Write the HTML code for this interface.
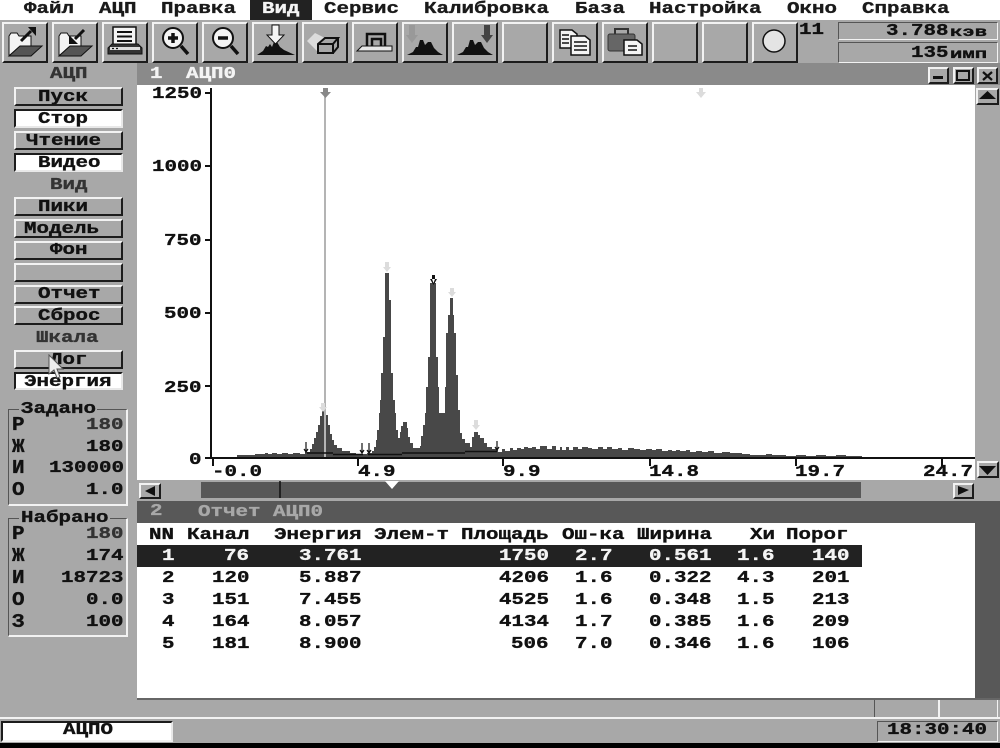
<!DOCTYPE html>
<html><head><meta charset="utf-8"><style>
html,body{margin:0;padding:0;background:#000}
#p{position:relative;width:1000px;height:748px;overflow:hidden;background:#a8a8a8}
.a{position:absolute}
.t{position:absolute;margin-top:1px;font:bold 17px/16px "Liberation Mono","DejaVu Sans Mono",monospace;color:#111;white-space:pre;transform:scaleX(1.225);transform-origin:0 0;-webkit-text-stroke:.35px currentColor}
.m{color:#1a1a1a}
.w{color:#f4f4f4}
.g{color:#333}
.l{font-size:19px;transform:scaleX(1.1)}
.k{font-size:14px;transform:scaleX(1.47)}
.b{position:absolute;box-sizing:border-box;background:#a8a8a8;border:2px solid;border-color:#f2f2f2 #1c1c1c #1c1c1c #f2f2f2}
.s{position:absolute;box-sizing:border-box;background:#fff;border:2px solid;border-color:#1c1c1c #e8e8e8 #e8e8e8 #1c1c1c}
.f{position:absolute;box-sizing:border-box;border:1px solid;border-color:#555 #f2f2f2 #f2f2f2 #555}
</style></head><body><div id="p">

<!-- menu -->
<div class="a" style="left:0;top:0;width:1000px;height:20px;background:#fff"></div>
<div class="a" style="left:250px;top:0;width:62px;height:20px;background:#222"></div>
<span class="t m" style="left:24px;top:1px">Файл</span>
<span class="t m" style="left:99px;top:1px">АЦП</span>
<span class="t m" style="left:161px;top:1px">Правка</span>
<span class="t m w" style="left:262px;top:1px">Вид</span>
<span class="t m" style="left:324px;top:1px">Сервис</span>
<span class="t m" style="left:424px;top:1px">Калибровка</span>
<span class="t m" style="left:575px;top:1px">База</span>
<span class="t m" style="left:649px;top:1px">Настройка</span>
<span class="t m" style="left:787px;top:1px">Окно</span>
<span class="t m" style="left:862px;top:1px">Справка</span>

<!-- toolbar buttons -->
<div class="b" style="left:2px;top:22px;width:46px;height:41px"></div>
<div class="b" style="left:52px;top:22px;width:46px;height:41px"></div>
<div class="b" style="left:102px;top:22px;width:46px;height:41px"></div>
<div class="b" style="left:152px;top:22px;width:46px;height:41px"></div>
<div class="b" style="left:202px;top:22px;width:46px;height:41px"></div>
<div class="b" style="left:252px;top:22px;width:46px;height:41px"></div>
<div class="b" style="left:302px;top:22px;width:46px;height:41px"></div>
<div class="b" style="left:352px;top:22px;width:46px;height:41px"></div>
<div class="b" style="left:402px;top:22px;width:46px;height:41px"></div>
<div class="b" style="left:452px;top:22px;width:46px;height:41px"></div>
<div class="b" style="left:502px;top:22px;width:46px;height:41px"></div>
<div class="b" style="left:552px;top:22px;width:46px;height:41px"></div>
<div class="b" style="left:602px;top:22px;width:46px;height:41px"></div>
<div class="b" style="left:652px;top:22px;width:46px;height:41px"></div>
<div class="b" style="left:702px;top:22px;width:46px;height:41px"></div>
<div class="b" style="left:752px;top:22px;width:46px;height:41px"></div>

<!-- counter + readouts -->
<span class="t" style="left:799px;top:22px">11</span>
<div class="f" style="left:838px;top:22px;width:160px;height:18px"></div>
<div class="f" style="left:838px;top:42px;width:160px;height:21px"></div>
<span class="t" style="left:886px;top:23px">3.788</span>
<span class="t k" style="left:950px;top:24px">кэв</span>
<span class="t" style="left:911px;top:45px">135</span>
<span class="t k" style="left:950px;top:46px">имп</span>

<!-- plot window -->
<div class="a" style="left:137px;top:63px;width:863px;height:22px;background:#8a8a8a"></div>
<div class="a" style="left:137px;top:85px;width:838px;height:395px;background:#fff"></div>
<span class="t w" style="left:150px;top:66px">1</span>
<span class="t w" style="left:186px;top:66px">АЦП0</span>
<div class="b" style="left:928px;top:67px;width:21px;height:17px"></div>
<div class="b" style="left:953px;top:67px;width:21px;height:17px"></div>
<div class="b" style="left:977px;top:67px;width:21px;height:17px"></div>
<div class="b" style="left:976px;top:88px;width:23px;height:17px"></div>
<div class="b" style="left:977px;top:461px;width:22px;height:17px"></div>

<!-- hscroll -->
<div class="a" style="left:137px;top:480px;width:863px;height:21px;background:#a8a8a8"></div>
<div class="a" style="left:201px;top:482px;width:660px;height:16px;background:#585858"></div>
<div class="b" style="left:139px;top:483px;width:22px;height:16px"></div>
<div class="b" style="left:953px;top:483px;width:21px;height:16px"></div>

<!-- report window -->
<div class="a" style="left:137px;top:501px;width:863px;height:22px;background:#585858"></div>
<div class="a" style="left:975px;top:523px;width:25px;height:175px;background:#585858"></div>
<div class="a" style="left:137px;top:523px;width:838px;height:175px;background:#fff"></div>
<div class="a" style="left:137px;top:545px;width:725px;height:22px;background:#222"></div>

<!-- bottom bars -->
<div class="a" style="left:137px;top:698px;width:863px;height:2px;background:#666"></div>
<div class="a" style="left:874px;top:700px;width:1px;height:17px;background:#555"></div>
<div class="a" style="left:938px;top:700px;width:2px;height:17px;background:#f2f2f2"></div>
<div class="a" style="left:997px;top:700px;width:1px;height:17px;background:#f2f2f2"></div>
<div class="a" style="left:0;top:717px;width:1000px;height:2px;background:#f2f2f2"></div>
<div class="a" style="left:0;top:743px;width:1000px;height:5px;background:#000"></div>
<div class="s" style="left:1px;top:721px;width:172px;height:21px;border-bottom-color:#f2f2f2"></div>
<div class="f" style="left:877px;top:721px;width:121px;height:21px"></div>
<span class="t" style="left:63px;top:722px">АЦПО</span>
<span class="t" style="left:887px;top:722px">18:30:40</span>

<!-- graphics -->
<svg class="a" style="left:0;top:0" width="1000" height="748" viewBox="0 0 1000 748">
 <!-- spectrum -->
 <path fill="#484848" shape-rendering="crispEdges" d="M237 458V455H255V454H265V453H268V454H272V453H277V454H282V453H288V454H293V453H300V454H305V452H310V449H312V444H314V438H316V432H318V425H320V416H322V411H326V415H328V425H330V434H332V440H334V445H337V448H342V451H350V453H356V455H362V454H367V453H372V451H374V447H376V440H377V430H379V413H380V400H381V373H383V337H385V273H389V300H391V373H393V400H395V413H396V430H398V438H400V432H401V426H403V422H407V428H408V437H410V443H413V448H420V446H421V436H423V425H425V413H426V387H428V357H430V283H432V275H435V283H436V357H438V387H439V413H443V413H445V387H446V333H448V315H450V298H453V315H454V333H456V375H458V410H460V433H462V439H465V443H470V447H472V437H474V432H478V435H480V438H484V443H487V447H492V449H497V450H498V452H502V449H505V451H510V448H513V450H517V448H521V449H524V447H528V448H532V447H536V449H540V446H547V449H552V446H556V450H560V447H562V450H566V447H569V450H573V447H578V449H582V447H588V448H592V449H598V447H603V449H607V447H612V449H618V448H622V450H628V448H634V449H640V450H646V449H652V450H656V449H662V451H668V450H672V451H676V450H680V451H686V450H690V452H696V451H702V452H708V451H714V453H722V452H730V453H742V454H750V455H766V454H772V455H786V456H796V455H806V456H816V455H826V456H836V455H846V456H862V457H960V458Z"/>
 <!-- marker line -->
 <path stroke="#b4b4b4" stroke-width="2" d="M325 96V458"/>
 <!-- axes -->
 <path fill="none" stroke="#111" stroke-width="2" d="M211 88V458H975"/>
 <path fill="none" stroke="#111" stroke-width="2" d="M205 93H211M205 166H211M205 240H211M205 313H211M205 386H211M205 458H211M213 459V466M358 459V466M503 459V466M650 459V466M796 459V466M942 459V466"/>
 <!-- fit baselines -->
 <path fill="none" stroke="#111" stroke-width="1.500" d="M307 453H333M333 454.500H363M368 454.500H402M402 453H465M465 451.500H497"/>
 <!-- small peak arrows -->
 <path fill="none" stroke="#111" stroke-width="1.200" d="M306 442V452M304 449L306 452 308 449M362 443V453M360 450L362 453 364 450M369 443V453M367 450L369 453 371 450M497 441V450M495 447L497 450 499 447"/>
 <path fill="#888" d="M323 88H328V92H331L325.500 98 320 92H323Z"/>
 <path fill="#dcdcdc" d="M699 88H703V92H706L701 98 696 92H699Z"/>
 <path fill="#dcdcdc" d="M385 262H389V267H391L387 272 383 267H385ZM450 288H454V292H456L452 297 448 292H450ZM474 420H478V425H480L476 430 472 425H474ZM321 403H325V407H327L323 412 319 407H321Z"/>
 <path fill="#111" d="M432 275H435V279H437L433.500 285 430 279H432Z"/>
 <path fill="#fff" d="M432 279H435L433.500 283Z"/>

 <!-- hscroll bits -->
 <path fill="#fff" d="M385 481H399L392 489Z"/>
 <path stroke="#111" stroke-width="1.500" d="M280 481V498"/>
 <path fill="#111" d="M155 486V496L145 491Z"/>
 <path fill="#111" d="M958 486L969 490 958 495Z"/>

 <!-- window buttons -->
 <rect x="933" y="76" width="10" height="3" fill="#111"/>
 <rect x="957" y="71" width="12" height="9" fill="none" stroke="#111" stroke-width="2"/>
 <path stroke="#111" stroke-width="2.200" d="M983 72L992 80M992 72L983 80"/>
 <path fill="#111" d="M987.500 91L996 99H979Z"/>
 <path fill="#111" d="M979 466H996L987.500 475Z"/>

 <!-- tool 1: open folder arrow out -->
 <path fill="#f4f4f4" stroke="#111" d="M9 36L11 33H17L19 36H31V47H19L10 55H9Z"/>
 <path fill="#555" stroke="#111" d="M9 56L20 46H42L31 56Z"/>
 <path stroke="#111" stroke-width="3" d="M21 41L31 31"/>
 <path fill="#111" d="M28 27H36V36Z"/>
 <!-- tool 2: arrow in -->
 <path fill="#f4f4f4" stroke="#111" d="M59 36L61 33H67L69 36H81V47H69L60 55H59Z"/>
 <path fill="#555" stroke="#111" d="M59 56L70 46H92L81 56Z"/>
 <path stroke="#111" stroke-width="3" d="M84 30L75 39"/>
 <path fill="#111" d="M69 35V44H78Z"/>
 <!-- tool 3: printer -->
 <rect x="113" y="27" width="23" height="19" fill="#f4f4f4" stroke="#111" stroke-width="1.500"/>
 <path stroke="#111" stroke-width="2" d="M117 32H132M117 36.500H132M117 41H132"/>
 <path fill="#333" stroke="#111" d="M108 48L112 44H138L142 48V54H108Z"/>
 <path fill="#ddd" d="M110 47H140V50H110Z"/>
 <path stroke="#111" stroke-width="1.200" d="M112 48.500H114M116 48.500H118"/>
 <!-- tool 4: zoom + -->
 <circle cx="173" cy="38" r="10" fill="#f4f4f4" stroke="#111" stroke-width="2"/>
 <path stroke="#111" stroke-width="3.500" d="M168 38H178M173 33V43M181 46L188 54"/>
 <!-- tool 5: zoom - -->
 <circle cx="223" cy="38" r="10" fill="#f4f4f4" stroke="#111" stroke-width="2"/>
 <path stroke="#111" stroke-width="3.500" d="M218 38H228M231 46L238 54"/>
 <!-- tool 6 -->
 <path fill="#111" d="M257 55L263 51 266 46 268 47 270 44 272 47 274 42 277 42 280 47 284 50 295 55Z"/>
 <path fill="#f4f4f4" stroke="#111" d="M272 25H279V35H284L275.500 44 267 35H272Z"/>
 <!-- tool 7: eraser -->
 <path fill="#dcdcdc" d="M307 41L315 33 325 38 318 52Z"/>
 <path fill="#a8a8a8" stroke="#111" stroke-width="2" d="M318 44L325 38H338L333 44V53H318ZM318 44H333M338 38V47L333 53"/>
 <!-- tool 8: iron -->
 <path fill="#e8e8e8" stroke="#111" d="M357 51L362 46H392V51Z"/>
 <path fill="none" stroke="#111" stroke-width="2.500" d="M367 46V34H385V46M372 46V39H381V46"/>
 <!-- tool 9 -->
 <path fill="#111" d="M407 55L413 52 416 47 418 47 420 40 423 40 425 45 428 42 431 42 434 48 438 52 443 55Z"/>
 <path fill="#999" d="M409 25H415V35H418L412 43 406 35H409Z"/>
 <!-- tool 10 -->
 <path fill="#111" d="M457 55L463 52 466 47 468 47 470 40 473 40 475 45 478 42 481 42 484 48 488 52 493 55Z"/>
 <path fill="#444" d="M484 25H490V35H493L487 43 481 35H484Z"/>
 <!-- tool 12: copy -->
 <path fill="#f4f4f4" stroke="#111" stroke-width="1.500" d="M560 30H572L577 34V48H560Z"/>
 <path fill="#f4f4f4" stroke="#111" stroke-width="1.500" d="M571 36H585L590 40V55H571Z"/>
 <path stroke="#111" stroke-width="1.500" d="M562 35H569M562 39H569M562 43H569M574 42H587M574 46H587M574 50H587"/>
 <!-- tool 13: briefcase -->
 <rect x="608" y="34" width="27" height="17" rx="2" fill="#666" stroke="#333"/>
 <path fill="none" stroke="#333" stroke-width="2" d="M615 34V29H628V34"/>
 <path fill="#f4f4f4" stroke="#111" stroke-width="1.500" d="M624 40H637L642 44V55H624Z"/>
 <path stroke="#111" stroke-width="1.500" d="M628 46H637M628 50H637"/>
 <!-- circle -->
 <circle cx="774" cy="41" r="11" fill="#e4e4e4" stroke="#111" stroke-width="1.500"/>
</svg>

<!-- axis labels -->
<span class="t" style="left:152px;top:86px">1250</span>
<span class="t" style="left:152px;top:159px">1000</span>
<span class="t" style="left:164px;top:233px">750</span>
<span class="t" style="left:164px;top:306px">500</span>
<span class="t" style="left:164px;top:380px">250</span>
<span class="t" style="left:189px;top:452px">0</span>
<span class="t" style="left:212px;top:464px">-0.0</span>
<span class="t" style="left:358px;top:464px">4.9</span>
<span class="t" style="left:503px;top:464px">9.9</span>
<span class="t" style="left:649px;top:464px">14.8</span>
<span class="t" style="left:795px;top:464px">19.7</span>
<span class="t" style="left:923px;top:464px">24.7</span>

<!-- report title -->
<span class="t" style="left:150px;top:503px;color:#a8a8a8">2</span>
<span class="t" style="left:198px;top:504px;color:#a8a8a8">Отчет АЦП0</span>

<!-- table -->
<span class="t" style="left:149px;top:527px">NN</span>
<span class="t" style="left:187px;top:527px">Канал</span>
<span class="t" style="left:274px;top:527px">Энергия</span>
<span class="t" style="left:374px;top:527px">Элем-т</span>
<span class="t" style="left:461px;top:527px">Площадь</span>
<span class="t" style="left:562px;top:527px">Ош-ка</span>
<span class="t" style="left:637px;top:527px">Ширина</span>
<span class="t" style="left:750px;top:527px">Хи</span>
<span class="t" style="left:786px;top:527px">Порог</span>

<span class="t w" style="left:162px;top:548px">1</span>
<span class="t w" style="left:224px;top:548px">76</span>
<span class="t w" style="left:299px;top:548px">3.761</span>
<span class="t w" style="left:499px;top:548px">1750</span>
<span class="t w" style="left:575px;top:548px">2.7</span>
<span class="t w" style="left:649px;top:548px">0.561</span>
<span class="t w" style="left:737px;top:548px">1.6</span>
<span class="t w" style="left:812px;top:548px">140</span>

<span class="t" style="left:162px;top:570px">2</span>
<span class="t" style="left:212px;top:570px">120</span>
<span class="t" style="left:299px;top:570px">5.887</span>
<span class="t" style="left:499px;top:570px">4206</span>
<span class="t" style="left:575px;top:570px">1.6</span>
<span class="t" style="left:649px;top:570px">0.322</span>
<span class="t" style="left:737px;top:570px">4.3</span>
<span class="t" style="left:812px;top:570px">201</span>

<span class="t" style="left:162px;top:592px">3</span>
<span class="t" style="left:212px;top:592px">151</span>
<span class="t" style="left:299px;top:592px">7.455</span>
<span class="t" style="left:499px;top:592px">4525</span>
<span class="t" style="left:575px;top:592px">1.6</span>
<span class="t" style="left:649px;top:592px">0.348</span>
<span class="t" style="left:737px;top:592px">1.5</span>
<span class="t" style="left:812px;top:592px">213</span>

<span class="t" style="left:162px;top:614px">4</span>
<span class="t" style="left:212px;top:614px">164</span>
<span class="t" style="left:299px;top:614px">8.057</span>
<span class="t" style="left:499px;top:614px">4134</span>
<span class="t" style="left:575px;top:614px">1.7</span>
<span class="t" style="left:649px;top:614px">0.385</span>
<span class="t" style="left:737px;top:614px">1.6</span>
<span class="t" style="left:812px;top:614px">209</span>

<span class="t" style="left:162px;top:636px">5</span>
<span class="t" style="left:212px;top:636px">181</span>
<span class="t" style="left:299px;top:636px">8.900</span>
<span class="t" style="left:511px;top:636px">506</span>
<span class="t" style="left:575px;top:636px">7.0</span>
<span class="t" style="left:649px;top:636px">0.346</span>
<span class="t" style="left:737px;top:636px">1.6</span>
<span class="t" style="left:812px;top:636px">106</span>

<!-- left panel -->
<span class="t g" style="left:50px;top:66px">АЦП</span>
<div class="b" style="left:14px;top:87px;width:109px;height:19px"></div>
<div class="s" style="left:14px;top:109px;width:109px;height:19px"></div>
<div class="b" style="left:14px;top:131px;width:109px;height:19px"></div>
<div class="s" style="left:14px;top:153px;width:109px;height:19px"></div>
<span class="t" style="left:38px;top:89px">Пуск</span>
<span class="t" style="left:38px;top:111px">Стор</span>
<span class="t" style="left:26px;top:133px">Чтение</span>
<span class="t" style="left:38px;top:155px">Видео</span>
<span class="t g" style="left:50px;top:177px">Вид</span>
<div class="b" style="left:14px;top:197px;width:109px;height:19px"></div>
<div class="b" style="left:14px;top:219px;width:109px;height:19px"></div>
<div class="b" style="left:14px;top:241px;width:109px;height:19px"></div>
<div class="b" style="left:14px;top:263px;width:109px;height:19px"></div>
<div class="b" style="left:14px;top:285px;width:109px;height:19px"></div>
<div class="b" style="left:14px;top:306px;width:109px;height:19px"></div>
<span class="t" style="left:38px;top:199px">Пики</span>
<span class="t" style="left:24px;top:221px">Модель</span>
<span class="t" style="left:50px;top:242px">Фон</span>
<span class="t" style="left:38px;top:286px">Отчет</span>
<span class="t" style="left:38px;top:308px">Сброс</span>
<span class="t g" style="left:36px;top:330px">Шкала</span>
<div class="b" style="left:14px;top:350px;width:109px;height:19px"></div>
<div class="s" style="left:14px;top:372px;width:109px;height:18px"></div>
<span class="t" style="left:50px;top:352px">Лог</span>
<span class="t" style="left:24px;top:374px">Энергия</span>
<svg class="a" style="left:48px;top:354px" width="16" height="26" viewBox="0 0 16 26"><path fill="#eee" stroke="#555" d="M1 1V20L6 16 9 24 12 23 9 15H15Z"/></svg>

<!-- group boxes -->
<div class="f" style="left:8px;top:409px;width:120px;height:97px;border-width:1px 2px 2px 1px"></div>
<div class="a" style="left:19px;top:403px;width:78px;height:12px;background:#a8a8a8"></div>
<span class="t" style="left:21px;top:401px">Задано</span>
<span class="t l" style="left:12px;top:416px">Р</span>
<span class="t g" style="left:86px;top:417px">180</span>
<span class="t l" style="left:12px;top:438px">Ж</span>
<span class="t" style="left:86px;top:439px">180</span>
<span class="t l" style="left:12px;top:459px">И</span>
<span class="t" style="left:49px;top:460px">130000</span>
<span class="t l" style="left:12px;top:481px">О</span>
<span class="t" style="left:86px;top:482px">1.0</span>

<div class="f" style="left:8px;top:518px;width:120px;height:119px;border-width:1px 2px 2px 1px"></div>
<div class="a" style="left:19px;top:512px;width:91px;height:12px;background:#a8a8a8"></div>
<span class="t" style="left:21px;top:510px">Набрано</span>
<span class="t l" style="left:12px;top:525px">Р</span>
<span class="t g" style="left:86px;top:526px">180</span>
<span class="t l" style="left:12px;top:547px">Ж</span>
<span class="t" style="left:86px;top:548px">174</span>
<span class="t l" style="left:12px;top:569px">И</span>
<span class="t" style="left:61px;top:570px">18723</span>
<span class="t l" style="left:12px;top:591px">О</span>
<span class="t" style="left:86px;top:592px">0.0</span>
<span class="t l" style="left:12px;top:613px">З</span>
<span class="t" style="left:86px;top:614px">100</span>
</div></body></html>
